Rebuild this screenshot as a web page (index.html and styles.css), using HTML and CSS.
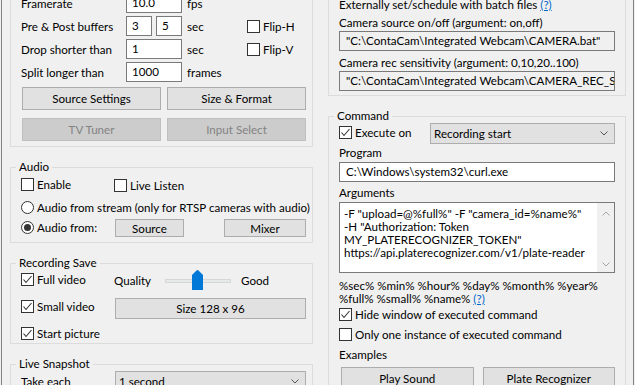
FILE: index.html
```html
<!DOCTYPE html>
<html lang="en">
<head>
<meta charset="utf-8">
<title>Camera settings</title>
<link rel="stylesheet" href="styles.css">
</head>
<body>
<div class="frame">
  <div class="col col-left">
    <div class="box g-video">
      <div class="frow"><span class="lbl">Framerate</span><span class="edit w56">10.0</span><span class="unit">fps</span></div>
      <div class="frow"><span class="lbl">Pre &amp; Post buffers</span><span class="edit w26">3</span><span class="edit w26 ml4">5</span><span class="unit">sec</span><span class="check"><svg class="cb" viewBox="0 0 13 13"><rect x="0.5" y="0.5" width="12" height="12" fill="#fff" stroke="#333"/></svg>Flip-H</span></div>
      <div class="frow"><span class="lbl">Drop shorter than</span><span class="edit w56">1</span><span class="unit">sec</span><span class="check"><svg class="cb" viewBox="0 0 13 13"><rect x="0.5" y="0.5" width="12" height="12" fill="#fff" stroke="#333"/></svg>Flip-V</span></div>
      <div class="frow"><span class="lbl">Split longer than</span><span class="edit w56">1000</span><span class="unit">frames</span></div>
      <div class="btnrow"><span class="btn">Source Settings</span><span class="btn">Size &amp; Format</span></div>
      <div class="btnrow btnrow2"><span class="btn dis">TV Tuner</span><span class="btn dis">Input Select</span></div>
    </div>

    <fieldset class="box g-left">
      <legend>Audio</legend>
      <div class="arow">
        <span class="cell93"><span class="check"><svg class="cb" viewBox="0 0 13 13"><rect x="0.5" y="0.5" width="12" height="12" fill="#fff" stroke="#333"/></svg>Enable</span></span>
        <span class="check"><svg class="cb" viewBox="0 0 13 13"><rect x="0.5" y="0.5" width="12" height="12" fill="#fff" stroke="#333"/></svg>Live Listen</span>
      </div>
      <div class="arow arow2">
        <span class="check"><svg class="cb" viewBox="0 0 13 13"><circle cx="6.5" cy="6.5" r="6" fill="#fff" stroke="#333"/></svg>Audio from stream (only for RTSP cameras with audio)</span>
      </div>
      <div class="arow arow3">
        <span class="cell94"><span class="check"><svg class="cb" viewBox="0 0 13 13"><circle cx="6.5" cy="6.5" r="6" fill="#fff" stroke="#333"/><circle cx="6.5" cy="6.5" r="3.5" fill="#333"/></svg>Audio from:</span></span>
        <span class="btn b-source">Source</span>
        <span class="btn b-mixer">Mixer</span>
      </div>
    </fieldset>

    <fieldset class="box g-left g-rec">
      <legend>Recording Save</legend>
      <div class="rrow1">
        <span class="cell93"><span class="check"><svg class="cb" viewBox="0 0 13 13"><rect x="0.5" y="0.5" width="12" height="12" fill="#fff" stroke="#333"/><path d="M2.5 6.5 L5 9.5 L10.5 3" fill="none" stroke="#333" stroke-width="1.1"/></svg>Full video</span></span>
        <span class="quality">Quality</span>
        <span class="slider"><span class="track"></span><svg class="thumb" viewBox="0 0 11 20"><path d="M0 5 L4.5 0.4 Q5.5 -0.3 6.5 0.4 L11 5 L11 20 L0 20 Z" fill="#0078d7"/></svg></span>
        <span class="good">Good</span>
      </div>
      <div class="rrow2">
        <span class="cell94"><span class="check"><svg class="cb" viewBox="0 0 13 13"><rect x="0.5" y="0.5" width="12" height="12" fill="#fff" stroke="#333"/><path d="M2.5 6.5 L5 9.5 L10.5 3" fill="none" stroke="#333" stroke-width="1.1"/></svg>Small video</span></span>
        <span class="btn b-size">Size 128 x 96</span>
      </div>
      <div class="rrow3">
        <span class="check"><svg class="cb" viewBox="0 0 13 13"><rect x="0.5" y="0.5" width="12" height="12" fill="#fff" stroke="#333"/><path d="M2.5 6.5 L5 9.5 L10.5 3" fill="none" stroke="#333" stroke-width="1.1"/></svg>Start picture</span>
      </div>
    </fieldset>

    <fieldset class="box g-left g-snap">
      <legend>Live Snapshot</legend>
      <div class="srow">
        <span class="cell94">Take each</span>
        <span class="combo c-snap"><span>1 second</span><svg class="chev" viewBox="0 0 8 5"><path d="M0.5 0.5 L4 4 L7.5 0.5" fill="none" stroke="#555"/></svg></span>
      </div>
    </fieldset>
  </div>

  <div class="col col-right">
    <div class="box g-ext">
      <div class="line">Externally set/schedule with batch files <span class="link">(?)</span></div>
      <div class="line mt2">Camera source on/off (argument: on,off)</div>
      <div class="edit ro full">"C:\ContaCam\Integrated Webcam\CAMERA.bat"</div>
      <div class="line mt4">Camera rec sensitivity (argument: 0,10,20..100)</div>
      <div class="edit ro full">"C:\ContaCam\Integrated Webcam\CAMERA_REC_SENSITIVITY.bat"</div>
    </div>

    <fieldset class="box g-cmd">
      <legend>Command</legend>
      <div class="xrow">
        <span class="cell91"><span class="check"><svg class="cb" viewBox="0 0 13 13"><rect x="0.5" y="0.5" width="12" height="12" fill="#fff" stroke="#333"/><path d="M2.5 6.5 L5 9.5 L10.5 3" fill="none" stroke="#333" stroke-width="1.1"/></svg>Execute on</span></span>
        <span class="combo c-exec"><span>Recording start</span><svg class="chev" viewBox="0 0 8 5"><path d="M0.5 0.5 L4 4 L7.5 0.5" fill="none" stroke="#555"/></svg></span>
      </div>
      <div class="line mt1 mb1">Program</div>
      <div class="edit full">C:\Windows\system32\curl.exe</div>
      <div class="line mt3 mb1">Arguments</div>
      <div class="tarea">
        <div class="ttext">-F "upload=@%full%" -F "camera_id=%name%"<br>-H "Authorization: Token<br>MY_PLATERECOGNIZER_TOKEN"<br>https://api.platerecognizer.com/v1/plate-reader</div>
        <div class="vscroll">
          <svg class="arrow" viewBox="0 0 8 5"><path d="M0.5 4.5 L4 1 L7.5 4.5" fill="none" stroke="#a6a6a6"/></svg>
          <svg class="arrow" viewBox="0 0 8 5"><path d="M0.5 0.5 L4 4 L7.5 0.5" fill="none" stroke="#a6a6a6"/></svg>
        </div>
      </div>
      <div class="vars">%sec% %min% %hour% %day% %month% %year%<br>%full% %small% %name% <span class="link">(?)</span></div>
      <div class="crow"><span class="check"><svg class="cb" viewBox="0 0 13 13"><rect x="0.5" y="0.5" width="12" height="12" fill="#fff" stroke="#333"/><path d="M2.5 6.5 L5 9.5 L10.5 3" fill="none" stroke="#333" stroke-width="1.1"/></svg>Hide window of executed command</span></div>
      <div class="crow mt2"><span class="check"><svg class="cb" viewBox="0 0 13 13"><rect x="0.5" y="0.5" width="12" height="12" fill="#fff" stroke="#333"/></svg>Only one instance of executed command</span></div>
      <div class="line mt4">Examples</div>
      <div class="exrow"><span class="btn">Play Sound</span><span class="btn">Plate Recognizer</span></div>
    </fieldset>
  </div>
</div>
</body>
</html>
```

FILE: styles.css
```css
* { box-sizing: border-box; }
html, body { margin: 0; height: 385px; overflow: hidden; }
body {
  background: #f0f0f0;
  font-family: Lato, "Liberation Sans", sans-serif;
  font-size: 11.6px;
  color: #000;
}
.frame {
  margin-left: 1px;
  width: 633px;
  height: 385px;
  border-left: 1px solid #828282;
  border-right: 1px solid #828282;
  padding: 0 7px 0 8px;
  display: flex;
  gap: 15px;
  align-items: flex-start;
}
.col { display: flex; flex-direction: column; }
.col-left { width: 303px; }
.col-right { width: 298px; }

.box { border: 1px solid #dcdcdc; }
fieldset.box { margin: 13px 0 0; min-width: 0; }
legend { margin-left: -5px; padding: 0 3px; line-height: 14px; }
.g-left { padding: 0 6px 5px 10px; }

/* video group */
.g-video { margin-top: -30px; padding: 22px 6px 5px 10px; }
.frow { display: flex; align-items: center; height: 20px; }
.frow + .frow { margin-top: 3px; }
.lbl { width: 105px; white-space: nowrap; }
.edit {
  height: 20px;
  border: 1px solid #7a7a7a;
  background: #fff;
  padding-left: 5px;
  line-height: 18px;
  white-space: nowrap;
  overflow: hidden;
}
.edit.ro { background: #f0f0f0; }
.edit.full { width: 100%; padding-left: 6px; }
.w56 { width: 56px; }
.w26 { width: 26px; }
.ml4 { margin-left: 4px; }
.unit { margin-left: 5px; width: 60px; }

.btn {
  background: #e1e1e1;
  border: 1px solid #adadad;
  display: flex;
  align-items: center;
  justify-content: center;
  white-space: nowrap;
}
.btn.dis { background: #cccccc; border-color: #bfbfbf; color: #838383; }
.btnrow { display: grid; grid-template-columns: 139px 139px; gap: 6px; margin: 5px 0 0 1px; }
.btnrow .btn { height: 23px; }
.btnrow2 { margin-top: 8px; }

.check { display: inline-flex; align-items: center; gap: 3px; height: 16px; white-space: nowrap; }
.cb { width: 13px; height: 13px; flex: none; }
.cell93 { width: 93px; flex: none; }
.cell94 { width: 94px; flex: none; }
.cell91 { width: 91px; flex: none; }

/* audio */
.arow { display: flex; align-items: center; height: 18px; }
.g-left legend + .arow { margin-top: 2px; }
.arow2 { margin-top: 4px; }
.arow3 { margin-top: 3px; }
.b-source { width: 69px; height: 18px; }
.b-mixer { width: 82px; height: 18px; margin-left: 40px; }

/* recording */
.g-rec { padding-bottom: 1px; }
.rrow1 { display: flex; align-items: center; height: 20px; }
.quality { width: 51px; }
.slider { position: relative; width: 66px; height: 20px; }
.track {
  position: absolute; left: 0; top: 9px; width: 66px; height: 4px;
  background: #e7eaea; border: 1px solid #d6d6d6;
}
.thumb { position: absolute; left: 27px; top: 0; width: 11px; height: 20px; }
.good { margin-left: 10px; }
.rrow2 { display: flex; align-items: flex-start; height: 21px; margin-top: 8px; }
.b-size { width: 191px; height: 21px; }
.rrow3 { display: flex; align-items: center; height: 18px; margin-top: 5px; }

/* snapshot */
.srow { display: flex; align-items: center; height: 21px; }
.combo {
  display: flex; align-items: center; justify-content: space-between;
  height: 21px; background: #e1e1e1; border: 1px solid #adadad;
  padding: 0 6px 0 3px; white-space: nowrap;
}
.c-snap { width: 191px; }
.chev { width: 8px; height: 5px; }

/* right column */
.g-ext { margin-top: -30px; padding: 26px 10px 4px; }
.line { line-height: 16px; height: 16px; white-space: nowrap; }
.mt1 { margin-top: 1px; }
.mt2 { margin-top: 2px; }
.mt3 { margin-top: 3px; }
.mt4 { margin-top: 4px; }
.mb1 { margin-bottom: 1px; }
.link { color: #0066cc; text-decoration: underline; }

.g-cmd { padding: 0 10px 10px; }
.xrow { display: flex; align-items: flex-start; height: 21px; }
.xrow .check { margin-top: 1px; }
.c-exec { width: 185px; }

.tarea { display: flex; height: 71px; border: 1px solid #7a7a7a; background: #fff; }
.ttext { flex: 1; padding: 4px 0 0 4px; line-height: 13px; white-space: nowrap; overflow: hidden; }
.vscroll {
  width: 17px; background: #f0f0f0; display: flex; flex-direction: column;
  justify-content: space-between; align-items: center; padding: 8px 0 5px;
}
.arrow { width: 8px; height: 5px; }
.vars { line-height: 13px; margin-top: 6px; white-space: nowrap; }
.crow { display: flex; align-items: center; height: 18px; }
.exrow { display: grid; grid-template-columns: 1fr 1fr; gap: 9px; padding-left: 2px; margin-top: 4px; }
.exrow .btn { height: 23px; }
```
